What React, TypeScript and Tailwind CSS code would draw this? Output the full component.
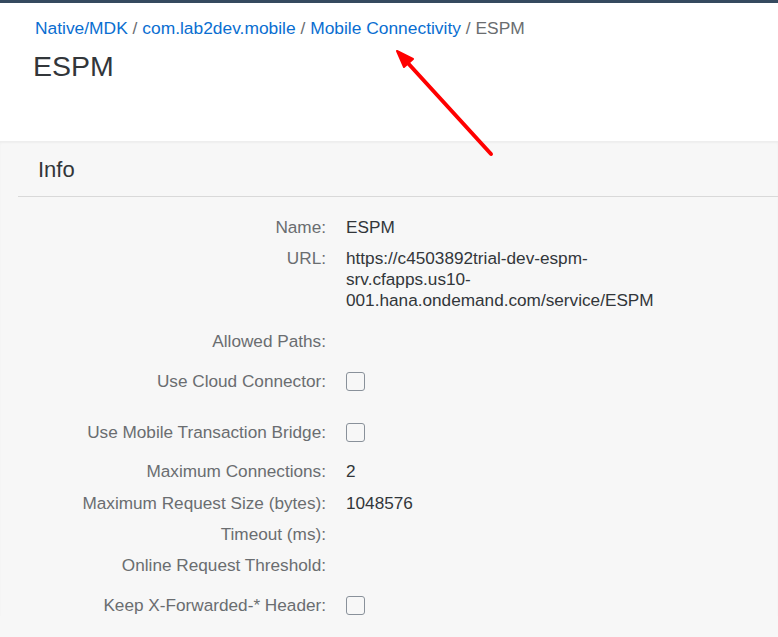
import React from "react";

const font = { fontFamily: '"Liberation Sans", Arial, sans-serif' };

function Checkbox() {
  return <div className="w-[19px] h-[19px] rounded-[3px] border border-[#89919a] bg-[#f7f7f7]" />;
}

type Row = { label: string; value?: React.ReactNode; mt: string; checkbox?: boolean };

export default function App() {
  const rows: Row[] = [
    { label: "Name:", value: "ESPM", mt: "mt-[20px]" },
    {
      label: "URL:",
      value: (
        <span className="block w-[330px]">
          https://c4503892trial-dev-espm-srv.cfapps.us10-001.hana.ondemand.com/service/ESPM
        </span>
      ),
      mt: "mt-[10px]",
    },
    { label: "Allowed Paths:", mt: "mt-[20px]" },
    { label: "Use Cloud Connector:", checkbox: true, mt: "mt-[19px]" },
    { label: "Use Mobile Transaction Bridge:", checkbox: true, mt: "mt-[30px]" },
    { label: "Maximum Connections:", value: "2", mt: "mt-[18px]" },
    { label: "Maximum Request Size (bytes):", value: "1048576", mt: "mt-[11px]" },
    { label: "Timeout (ms):", mt: "mt-[10px]" },
    { label: "Online Request Threshold:", mt: "mt-[10px]" },
    { label: "Keep X-Forwarded-* Header:", checkbox: true, mt: "mt-[19px]" },
  ];

  return (
    <div className="relative w-[778px] h-[637px] overflow-hidden bg-[#f7f7f7]" style={font}>
      <div className="bg-white">
        <div className="h-[3px] bg-[#354a5f]" />
        <div className="pl-[35px] pt-[15px] text-[17.4px] leading-[21px]">
          <span className="text-[#0a6ed1]">Native/MDK</span>
          <span className="text-[#6a6d70]"> / </span>
          <span className="text-[#0a6ed1]">com.lab2dev.mobile</span>
          <span className="text-[#6a6d70]"> / </span>
          <span className="text-[#0a6ed1]">Mobile Connectivity</span>
          <span className="text-[#6a6d70]"> / ESPM</span>
        </div>
        <div className="pl-[33px] mt-[9px] h-[93px] text-[28.5px] leading-[36px] text-[#32363a]">ESPM</div>
      </div>
      <div className="relative shadow-[inset_0_2px_2px_rgba(0,0,0,0.04)]">
        <div className="ml-[18px] h-[56px] border-b border-[#d9d9d9] flex items-center pl-[20px] pt-[2px] text-[22px] text-[#32363a]">
          Info
        </div>
        <div className="ml-[18px] flex flex-col text-[17.2px] leading-[21px]">
          {rows.map((r) => (
            <div key={r.label} className={`flex items-start ${r.mt}`}>
              <div className="w-[328px] pr-[20px] text-right text-[#6a6d70] shrink-0">{r.label}</div>
              <div className="text-[#32363a] min-h-[21px] flex items-center">
                {r.checkbox ? <Checkbox /> : r.value}
              </div>
            </div>
          ))}
        </div>
      </div>
      <svg className="absolute left-0 top-0 pointer-events-none" width="778" height="637">
        <line x1="491" y1="154" x2="406" y2="61" stroke="#ff0000" strokeWidth="4" strokeLinecap="round" />
        <polygon points="397,51 413,59 404,67" fill="#ff0000" stroke="#ff0000" strokeWidth="2" strokeLinejoin="round" />
      </svg>
    </div>
  );
}
